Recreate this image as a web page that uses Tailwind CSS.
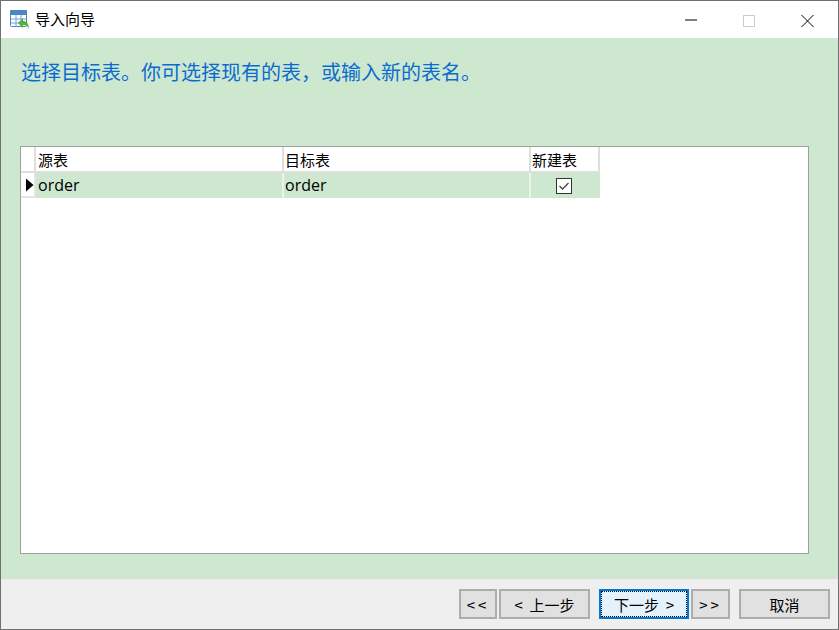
<!DOCTYPE html>
<html>

<head>
  <title>导入向导</title>
  <meta charset="UTF-8">
  <meta name="viewport" content="width=device-width, initial-scale=1.0">
  <script src="https://cdn.jsdelivr.net/npm/@tailwindcss/browser@4"></script>
</head>

<body class="h-screen overflow-hidden bg-white font-['Noto_Sans_CJK_SC',sans-serif] text-[15px] text-black">
  <div class="flex flex-col h-[630px] w-[839px] border border-[#707070]">

    <!-- title bar -->
    <div class="flex items-center h-[37px] shrink-0 bg-white">
      <svg class="ml-[9px] mr-[5px]" width="20" height="20" viewBox="0 0 20 20">
        <rect x="0.500" y="0.500" width="16" height="16" rx="1" fill="#ffffff" stroke="#4a86c0" />
        <rect x="0" y="0" width="17" height="5" rx="1" fill="#4a86c0" />
        <path d="M1 9h15M1 13h15M6 5v11M11 5v11" stroke="#6fa3d6" fill="none" />
        <path d="M8 13l5-5v3c3 0 6 2 6 8-1-3-3-4-6-4v3z" fill="#5cae3c" />
      </svg>
      <span class="leading-none -translate-y-px">导入向导</span>
      <div class="ml-auto flex items-center">
        <svg width="12" height="36" viewBox="0 0 12 36"><path d="M0 18h12" stroke="#000" /></svg>
        <svg class="ml-[46px]" width="12" height="36" viewBox="0 0 12 36"><rect x="0.500" y="13.500" width="11" height="11" fill="none" stroke="#cccccc" /></svg>
        <svg class="ml-[46px] mr-[24px]" width="13" height="36" viewBox="0 0 13 36"><path d="M0.500 13l12 12M12.500 13l-12 12" stroke="#000" /></svg>
      </div>
    </div>

    <!-- main panel -->
    <div class="flex flex-col flex-1 bg-[#cde8cf] pl-[19px] pr-[29px] pb-[24px]">
      <h1 class="h-[108px] shrink-0 pt-[20px] pl-px text-[20px] leading-[28px] text-[#0a6ccf]">选择目标表。你可选择现有的表，或输入新的表名。</h1>
      <div class="flex-1 bg-white border border-[#a0a0a0]">
        <div class="grid grid-cols-[15px_248px_247px_69px] w-[579px] leading-none">
          <div class="h-[26px] border-r-2 border-b-2 border-[#dedede]"></div>
          <div class="h-[26px] flex items-center pl-[2px] border-r-2 border-b-2 border-[#dedede]">源表</div>
          <div class="h-[26px] flex items-center pl-[1px] border-r-2 border-b-2 border-[#dedede]">目标表</div>
          <div class="h-[26px] flex items-center pl-[1px] border-r-2 border-b-2 border-[#dedede]">新建表</div>

          <div class="h-[25px] flex items-center justify-end border-r-2 border-b-2 border-[#e4e4e4]">
            <svg width="8" height="14" viewBox="0 0 8 14"><path d="M0 0.500l7.500 6.500-7.500 6.500z" fill="#000" /></svg>
          </div>
          <div class="h-[25px] pb-[2px] flex items-center pl-[2px] bg-[#cde8cf] border-r-2 border-[#e8f4e9] font-['Open_Sans',sans-serif] text-[16px]">order</div>
          <div class="h-[25px] pb-[2px] flex items-center pl-[1px] bg-[#cde8cf] border-r-2 border-[#e8f4e9] font-['Open_Sans',sans-serif] text-[16px]">order</div>
          <div class="h-[25px] flex items-center justify-center pr-[3px] bg-[#cde8cf]">
            <svg width="16" height="16" viewBox="0 0 16 16">
              <rect x="0.500" y="0.500" width="15" height="15" fill="#ffffff" stroke="#333333" />
              <path d="M3.500 8l3 3 6-6" fill="none" stroke="#444444" stroke-width="1.300" />
            </svg>
          </div>
        </div>
      </div>
    </div>

    <!-- footer buttons -->
    <div class="flex items-start h-[51px] shrink-0 bg-[#efefef] border-t border-[#dcdcdc] pt-[10px] pl-[458px] leading-none">
      <button class="w-[38px] h-[30px] bg-[#e1e1e1] border-2 border-[#adadad] tracking-[3px]">&lt;&lt;</button>
      <button class="ml-[2px] w-[91px] h-[30px] bg-[#e1e1e1] border-2 border-[#adadad]">&lt;&nbsp;&nbsp;上一步</button>
      <button class="ml-[9px] w-[90px] h-[30px] bg-[#e5f1fb] border-2 border-[#0078d7] outline-1 outline-dotted outline-offset-[-3px] outline-black">下一步&nbsp;&nbsp;&gt;</button>
      <button class="ml-[2px] w-[39px] h-[30px] bg-[#e1e1e1] border-2 border-[#adadad] tracking-[3px]">&gt;&gt;</button>
      <button class="ml-[9px] w-[91px] h-[30px] bg-[#e1e1e1] border-2 border-[#adadad]">取消</button>
    </div>
  </div>
</body>

</html>
